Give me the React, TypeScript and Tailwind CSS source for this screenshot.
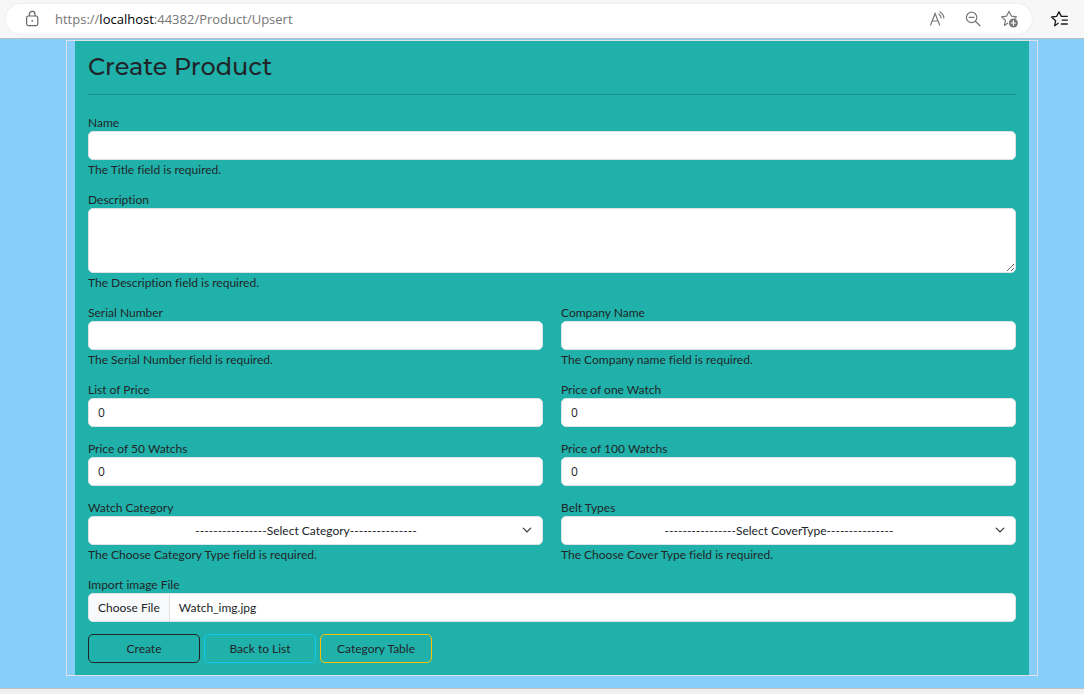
import { useEffect, useRef, type ReactNode } from "react";

const control =
  "block h-[29px] w-full rounded-[5px] border border-[#dee2e6] bg-white px-[9px] text-[12px] leading-[18px] text-[#212529] outline-none";

type FieldProps = {
  id: string;
  label: string;
  message?: string;
  children: ReactNode;
};

function Field({ id, label, message, children }: FieldProps) {
  return (
    <div className="min-w-0">
      <label htmlFor={id} className="block pt-0.5 leading-4">
        {label}
      </label>
      {children}
      {message && (
        <p id={`${id}-message`} className="pt-0.5 leading-4">
          {message}
        </p>
      )}
    </div>
  );
}

function TextField({ id, label, message, value }: { id: string; label: string; message?: string; value?: string }) {
  return (
    <Field id={id} label={label} message={message}>
      <input id={id} type="text" defaultValue={value} className={`${control} font-['Open_Sans','Noto_Sans',sans-serif]`} />
    </Field>
  );
}

function SelectField({ id, label, message, option }: { id: string; label: string; message: string; option: string }) {
  return (
    <Field id={id} label={label} message={message}>
      <div className="relative">
        <select id={id} className={`${control} appearance-none pr-7 text-center`}>
          <option>{option}</option>
        </select>
        <svg viewBox="0 0 16 16" className="pointer-events-none absolute top-[9px] right-[11px] size-2.5" fill="none" stroke="#343a40" strokeWidth="2" strokeLinecap="round" strokeLinejoin="round" aria-hidden="true">
          <path d="m2 5 6 6 6-6" />
        </svg>
      </div>
    </Field>
  );
}

function FileField() {
  const ref = useRef<HTMLInputElement>(null);

  useEffect(() => {
    const transfer = new DataTransfer();
    transfer.items.add(new File([], "Watch_img.jpg", { type: "image/jpeg" }));
    if (ref.current) ref.current.files = transfer.files;
  }, []);

  return (
    <Field id="image" label="Import image File">
      <input
        ref={ref}
        id="image"
        type="file"
        className="block h-[29px] w-full overflow-hidden rounded-[5px] border border-[#dee2e6] bg-white text-[12px] leading-[27px] text-[#212529] file:mr-[9px] file:h-[27px] file:border-0 file:border-r file:border-solid file:border-[#dee2e6] file:bg-[#f8f9fa] file:px-[9px] file:text-[12px] file:text-[#212529]"
      />
    </Field>
  );
}

function AddressBar() {
  return (
    <header className="flex h-[39px] items-center border-b border-[#bfbfbf] bg-[#f7f7f7] pr-3.5 pl-1.5">
      <div className="flex h-[30px] min-w-0 flex-1 items-center rounded-full bg-white pr-3 pl-[18px] shadow-[0_0_3px_rgba(0,0,0,0.08)]">
        <svg viewBox="0 0 16 18" className="mr-[15px] h-[18px] w-4 shrink-0" fill="none" stroke="#666" strokeWidth="1.2" aria-label="Site information" role="img">
          <rect x="2.6" y="6" width="11.2" height="9.6" rx="1.8" />
          <path d="M5.4 6V4.2a2.8 2.8 0 0 1 5.6 0V6" />
          <circle cx="8.2" cy="10.8" r=".9" fill="#666" stroke="none" />
        </svg>
        <p className="flex-1 truncate font-['Open_Sans','Noto_Sans',sans-serif] text-[13px] text-[#767676]">
          https://<span className="text-black">localhost</span>:44382/Product/Upsert
        </p>
        <div className="flex items-center gap-[18px] text-[#767676]">
          <button type="button" aria-label="Read aloud">
            <svg viewBox="0 0 18 18" className="size-[18px]" fill="none" stroke="currentColor" strokeWidth="1.2" strokeLinecap="round">
              <path d="m2.6 15 4.5-11.5L11.6 15M4.2 11H10" />
              <path d="M11 4.2c1.3.9 2 2.1 2.1 3.7M12 2c2.4 1.3 3.7 3.3 3.9 5.9" />
            </svg>
          </button>
          <button type="button" aria-label="Zoom out">
            <svg viewBox="0 0 18 18" className="size-[18px]" fill="none" stroke="currentColor" strokeWidth="1.2" strokeLinecap="round">
              <circle cx="7.6" cy="7.4" r="5.2" />
              <path d="m11.4 11.2 4.6 4.5M5.2 7.4H10" />
            </svg>
          </button>
          <button type="button" aria-label="Add to favorites">
            <svg viewBox="0 0 20 18" className="h-[18px] w-5" fill="none" stroke="currentColor" strokeWidth="1.2" strokeLinejoin="round" strokeLinecap="round">
              <path d="M7.6 13.2 4.5 15.4l.9-5L1.6 6.8l5-.7L9 1.4l2.4 4.7 5 .7-1.3 1.3" />
              <circle cx="13.4" cy="13" r="4.5" fill="currentColor" stroke="none" />
              <path d="M13.4 10.7v4.6M11.1 13h4.6" stroke="white" />
            </svg>
          </button>
        </div>
      </div>
      <button type="button" aria-label="Favorites" className="ml-[18px]">
        <svg viewBox="0 0 20 18" className="h-[18px] w-5" fill="none" stroke="#1b1b1b" strokeWidth="1.3" strokeLinejoin="round" strokeLinecap="round">
          <path d="M8.2 13.3 4.6 15.8l1-5L1.6 7l5-.6L9 1.8l2.3 4.6h6M12.2 10.2h5.1M11.4 14h5.9" />
        </svg>
      </button>
    </header>
  );
}

const button = "flex h-[29px] w-28 items-center justify-center rounded-[5px] border";

export default function App() {
  return (
    <div className="flex min-h-screen flex-col bg-[#87cefa] font-['Lato','Open_Sans',sans-serif] text-[12px] leading-[18px] text-[#212529] [font-variant-ligatures:none]">
      <AddressBar />
      <main className="flex-1 pt-px pr-[46px] pb-3 pl-[66px]">
        <div className="border border-[#dee2e6] px-2">
          <form className="bg-[#20b2aa] px-[13px] pb-3" onSubmit={(e) => e.preventDefault()}>
            <div className="mb-[18px] border-b border-[#212529]/25 pt-[11px] pb-3">
              <h1 className="font-['Montserrat','Inter',sans-serif] text-[24px] leading-[30px] font-medium">Create Product</h1>
            </div>
            <div className="flex flex-col gap-3">
              <TextField id="name" label="Name" message="The Title field is required." />
              <Field id="description" label="Description" message="The Description field is required.">
                <textarea
                  id="description"
                  className="block h-[65px] w-full resize-y rounded-[5px] border border-[#dee2e6] bg-white px-[9px] py-1 outline-none"
                />
              </Field>
              <div className="grid grid-cols-2 gap-x-[18px] gap-y-3">
                <TextField id="serial" label="Serial Number" message="The Serial Number field is required." />
                <TextField id="company" label="Company Name" message="The Company name field is required." />
                <TextField id="list-price" label="List of Price" value="0" />
                <TextField id="price-one" label="Price of one Watch" value="0" />
                <TextField id="price-50" label="Price of 50 Watchs" value="0" />
                <TextField id="price-100" label="Price of 100 Watchs" value="0" />
                <SelectField
                  id="category"
                  label="Watch Category"
                  option="----------------Select Category---------------"
                  message="The Choose Category Type field is required."
                />
                <SelectField
                  id="belt"
                  label="Belt Types"
                  option="----------------Select CoverType---------------"
                  message="The Choose Cover Type field is required."
                />
              </div>
              <FileField />
              <div className="flex gap-1">
                <button type="submit" className={`${button} border-[#212529]`}>
                  Create
                </button>
                <a href="#list" className={`${button} border-[#0dcaf0]`}>
                  Back to List
                </a>
                <a href="#categories" className={`${button} border-[#ffc107]`}>
                  Category Table
                </a>
              </div>
            </div>
          </form>
        </div>
      </main>
      <div className="h-1.5 border-t border-[#c0c0c0] bg-[#f0f0f0]" />
    </div>
  );
}
